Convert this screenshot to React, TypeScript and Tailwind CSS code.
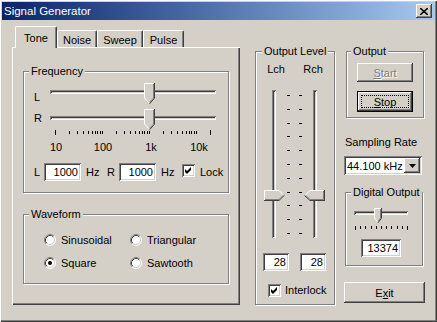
import React from "react";

const RAISED =
  "shadow-[inset_-1px_-1px_0_#404040,inset_1px_1px_0_#fff,inset_-2px_-2px_0_#808080]";
const SUNKEN =
  "shadow-[inset_1px_1px_0_#808080,inset_-1px_-1px_0_#fff,inset_2px_2px_0_#404040,inset_-2px_-2px_0_#d4d0c8]";

function Group({
  label,
  className = "",
  labelClass = "left-[5px]",
  children,
}: {
  label: string;
  className?: string;
  labelClass?: string;
  children?: React.ReactNode;
}) {
  return (
    <div
      className={
        "relative border border-[#808080] shadow-[inset_1px_1px_0_#fff,1px_1px_0_#fff] " +
        className
      }
    >
      <span
        className={
          "absolute top-[-8px] bg-[#d4d0c8] px-[2px] leading-[14px] whitespace-nowrap " +
          labelClass
        }
      >
        {label}
      </span>
      {children}
    </div>
  );
}

function ThumbDown({ w, h }: { w: number; h: number }) {
  const p = Math.floor(w / 2);
  const b = h - 1 - p;
  const m = w / 2;
  return (
    <svg width={w} height={h} viewBox={`0 0 ${w} ${h}`} className="block">
      <polygon points={`0,0 ${w},0 ${w},${b} ${m},${h} 0,${b}`} fill="#d4d0c8" />
      <polyline points={`0.5,${b} 0.5,0.5 ${w - 1},0.5`} fill="none" stroke="#fff" />
      <polyline points={`0.5,${b} ${m},${h - 0.5}`} fill="none" stroke="#fff" />
      <polyline points={`${w - 0.5},0 ${w - 0.5},${b + 0.2} ${m},${h - 0.2}`} fill="none" stroke="#404040" />
      <polyline points={`${w - 1.5},1 ${w - 1.5},${b} ${m},${h - 1.7}`} fill="none" stroke="#808080" />
    </svg>
  );
}

function ThumbRight() {
  return (
    <svg width="21" height="11" viewBox="0 0 21 11" className="block">
      <polygon points="0,0 15,0 20.5,5.5 15,11 0,11" fill="#d4d0c8" />
      <polyline points="0.5,10 0.5,0.5 15,0.5 20,5.5" fill="none" stroke="#fff" />
      <polyline points="0,10.5 15,10.5 20.6,5" fill="none" stroke="#404040" />
      <polyline points="1,9.5 15,9.5 19.3,5.3" fill="none" stroke="#808080" />
    </svg>
  );
}

function ThumbLeft() {
  return (
    <svg width="21" height="11" viewBox="0 0 21 11" className="block">
      <polygon points="21,0 6,0 0.5,5.5 6,11 21,11" fill="#d4d0c8" />
      <polyline points="20,0.5 6,0.5 1,5.5" fill="none" stroke="#fff" />
      <polyline points="0.5,5.5 6,10.5 21,10.5 M20.5,0 L20.5,11" fill="none" stroke="#404040" />
      <polyline points="20.5,0 20.5,11" fill="none" stroke="#404040" />
      <polyline points="2,5.5 6,9.5 19.5,9.5 19.5,1" fill="none" stroke="#808080" />
    </svg>
  );
}

function Check({ checked }: { checked: boolean }) {
  return (
    <span className={"inline-block w-[13px] h-[13px] bg-white shrink-0 " + SUNKEN}>
      {checked && (
        <svg width="13" height="13" viewBox="0 0 13 13" className="block">
          <polygon points="3,5 5,7 9,3 9,6 5,10 3,8" fill="#000" />
        </svg>
      )}
    </span>
  );
}

function Radio({ checked }: { checked: boolean }) {
  return (
    <svg width="12" height="12" viewBox="0 0 12 12" className="block shrink-0">
      <circle cx="6" cy="6" r="5" fill="#fff" />
      <path d="M2.11 9.89 A5.5 5.5 0 0 1 9.89 2.11" fill="none" stroke="#808080" />
      <path d="M9.89 2.11 A5.5 5.5 0 0 1 2.11 9.89" fill="none" stroke="#fff" />
      <path d="M2.82 9.18 A4.5 4.5 0 0 1 9.18 2.82" fill="none" stroke="#404040" />
      <path d="M9.18 2.82 A4.5 4.5 0 0 1 2.82 9.18" fill="none" stroke="#d4d0c8" />
      {checked && <circle cx="6" cy="6" r="2" fill="#000" />}
    </svg>
  );
}

function FreqSlider() {
  return (
    <div className="relative w-[170px] h-[21px]">
      <div className={"mt-[7px] mx-[2px] h-[4px] " + SUNKEN} />
      <div className="absolute left-[96px] top-0">
        <ThumbDown w={11} h={21} />
      </div>
    </div>
  );
}

function FreqTicks() {
  const vals: number[] = [];
  for (let d = 10; d <= 1000; d *= 10) for (let k = 1; k <= 9; k++) vals.push(d * k);
  vals.push(10000, 20000);
  return (
    <svg width="170" height="6" viewBox="0 0 170 6" className="block">
      {vals.map((v, i) => {
        const x = Math.round(7 + 47 * Math.log10(v / 10)) + 0.5;
        const end = i === 0 || i === vals.length - 1;
        return (
          <line key={i} x1={x} x2={x} y1={end ? 0 : 1} y2={end ? 5 : 4} stroke="#000" />
        );
      })}
    </svg>
  );
}

function Field({ className, children }: { className: string; children: React.ReactNode }) {
  return (
    <div className={"bg-white flex items-center justify-end pr-[3px] " + SUNKEN + " " + className}>
      {children}
    </div>
  );
}

function Tab({ selected, className, children }: { selected?: boolean; className: string; children: React.ReactNode }) {
  return (
    <div
      className={
        "relative flex items-center justify-center bg-[#d4d0c8] border-l border-t border-r border-l-white border-t-white border-r-[#404040] rounded-t-[2px] shadow-[inset_-1px_0_0_#808080] " +
        (selected ? "h-[22px] mb-[-1px] z-10 " : "h-[17px] pt-[2px] ") +
        className
      }
    >
      {children}
    </div>
  );
}

export default function App() {
  const vTicks = Array.from({ length: 11 }, (_, i) => Math.round(6 + i * 13.8) + 0.5);
  const dTicks = Array.from({ length: 11 }, (_, i) => Math.round(2 + i * 5.2) + 0.5);
  return (
    <div className="w-[437px] h-[322px] bg-[#d4d0c8] p-[2px] flex flex-col font-['Liberation_Sans',Arial,sans-serif] text-[11px] leading-[14px] text-black select-none overflow-hidden shadow-[inset_1px_1px_0_#fff,inset_-1px_-1px_0_#404040,inset_-2px_-2px_0_#808080]">
      {/* Title bar */}
      <div className="h-[18px] shrink-0 flex items-center bg-linear-to-r from-[#0a246a] to-[#a6caf0] pl-[2px]">
        <span className="text-white text-[11.5px]">Signal Generator</span>
        <div className={"ml-auto mr-[3px] w-[16px] h-[14px] bg-[#d4d0c8] flex items-center justify-center " + RAISED}>
          <svg width="8" height="7" viewBox="0 0 8 7" className="block">
            <path d="M0 0 L8 7 M8 0 L0 7" stroke="#000" strokeWidth="1.6" />
          </svg>
        </div>
      </div>

      {/* Body */}
      <div className="flex items-start pl-[10px] pt-[6px]">
        {/* Tabs column */}
        <div className="w-[228px] h-[279px] flex flex-col shrink-0">
          <div className="h-[21px] flex items-end pl-[3px] relative z-10 shrink-0">
            <Tab selected className="w-[42px]">Tone</Tab>
            <Tab className="w-[40px]">Noise</Tab>
            <Tab className="w-[46px]">Sweep</Tab>
            <Tab className="w-[41px]">Pulse</Tab>
          </div>
          <div className="flex-1 flex flex-col shadow-[inset_1px_1px_0_#fff,inset_-1px_-1px_0_#404040,inset_-2px_-2px_0_#808080]">
            <Group label="Frequency" className="ml-[11px] mt-[24px] w-[206px] h-[122px] flex flex-col">
              <div className="flex items-start pl-[10px] mt-[11px]">
                <span className="w-[14px] mt-[7px]">L</span>
                <FreqSlider />
              </div>
              <div className="flex items-start pl-[10px] mt-[5px]">
                <span className="w-[14px] mt-[2px]">R</span>
                <FreqSlider />
              </div>
              <div className="pl-[24px]">
                <FreqTicks />
              </div>
              <div className="flex mt-[4px] pl-[17px]">
                <span className="w-[30px] text-center">10</span>
                <span className="w-[30px] ml-[17px] text-center">100</span>
                <span className="w-[30px] ml-[18px] text-center">1k</span>
                <span className="w-[30px] ml-[18px] text-center">10k</span>
              </div>
              <div className="flex items-center mt-[9px] pl-[10px] h-[18px]">
                <span className="w-[10px]">L</span>
                <Field className="w-[37px] h-[18px]">1000</Field>
                <span className="ml-[5px] w-[13px]">Hz</span>
                <span className="ml-[8px] w-[12px]">R</span>
                <Field className="w-[37px] h-[18px]">1000</Field>
                <span className="ml-[5px] w-[13px]">Hz</span>
                <span className="ml-[8px]">
                  <Check checked />
                </span>
                <span className="ml-[5px]">Lock</span>
              </div>
            </Group>
            <Group label="Waveform" className="ml-[11px] mt-[21px] w-[206px] h-[70px] flex flex-col">
              <div className="flex mt-[18px] pl-[20px] h-[13px] items-center">
                <div className="w-[86px] flex items-center">
                  <Radio checked={false} />
                  <span className="ml-[5px]">Sinusoidal</span>
                </div>
                <div className="flex items-center">
                  <Radio checked={false} />
                  <span className="ml-[5px]">Triangular</span>
                </div>
              </div>
              <div className="flex mt-[10px] pl-[20px] h-[13px] items-center">
                <div className="w-[86px] flex items-center">
                  <Radio checked />
                  <span className="ml-[5px]">Square</span>
                </div>
                <div className="flex items-center">
                  <Radio checked={false} />
                  <span className="ml-[5px]">Sawtooth</span>
                </div>
              </div>
            </Group>
          </div>
        </div>

        {/* Output Level */}
        <Group label="Output Level" labelClass="left-[6px]" className="ml-[15px] mt-[25px] w-[80px] h-[254px] shrink-0 flex flex-col">
          <div className="flex mt-[10px] pl-[7px] gap-[11px]">
            <span className="w-[26px] text-center">Lch</span>
            <span className="w-[26px] text-center">Rch</span>
          </div>
          <div className="relative ml-[7px] mt-[13px] w-[62px] h-[150px]">
            <div className={"absolute left-[9px] top-[1px] w-[4px] h-[148px] " + SUNKEN} />
            <div className={"absolute left-[50px] top-[1px] w-[4px] h-[148px] " + SUNKEN} />
            <svg width="62" height="150" viewBox="0 0 62 150" className="absolute left-0 top-0">
              {vTicks.map((y, i) => (
                <g key={i}>
                  <line x1="24" x2="27" y1={y} y2={y} stroke="#000" />
                  <line x1="36" x2="39" y1={y} y2={y} stroke="#000" />
                </g>
              ))}
            </svg>
            <div className="absolute left-[1px] top-[101px]">
              <ThumbRight />
            </div>
            <div className="absolute left-[41px] top-[101px]">
              <ThumbLeft />
            </div>
          </div>
          <div className="flex mt-[14px] pl-[7px] gap-[11px]">
            <Field className="w-[26px] h-[18px]">28</Field>
            <Field className="w-[26px] h-[18px]">28</Field>
          </div>
          <div className="flex items-center mt-[12px] pl-[12px]">
            <Check checked />
            <span className="ml-[4px]">Interlock</span>
          </div>
        </Group>

        {/* Right column */}
        <div className="ml-[9px] w-[81px] flex flex-col shrink-0">
          <Group label="Output" labelClass="left-[4px]" className="ml-[2px] mt-[25px] w-[78px] h-[67px] flex flex-col">
            <div className={"mt-[11px] ml-[10px] w-[56px] h-[19px] flex items-center justify-center text-[#808080] [text-shadow:1px_1px_0_#fff] " + RAISED}>
              <span>
                <span className="underline">S</span>tart
              </span>
            </div>
            <div className="relative mt-[9px] ml-[10px] w-[56px] h-[21px] border border-black flex">
              <div className={"flex-1 flex items-center justify-center " + RAISED}>
                <span>
                  <span className="underline">S</span>top
                </span>
              </div>
              <div className="absolute inset-[3px] border border-dotted border-black" />
            </div>
          </Group>
          <span className="mt-[17px] ml-[1px] whitespace-nowrap">Sampling Rate</span>
          <div className={"mt-[7px] w-[78px] h-[19px] bg-white flex items-center pl-[3px] pr-[2px] " + SUNKEN}>
            <span className="flex-1">44.100 kHz</span>
            <div className={"w-[16px] h-[15px] bg-[#d4d0c8] flex items-center justify-center " + RAISED}>
              <svg width="7" height="4" viewBox="0 0 7 4" className="block">
                <polygon points="0,0 7,0 3.5,4" fill="#000" />
              </svg>
            </div>
          </div>
          <Group label="Digital Output" className="mt-[17px] ml-[1px] w-[78px] h-[74px] flex flex-col">
            <div className="relative mt-[15px] ml-[7px] w-[56px] h-[15px]">
              <div className={"mt-[3px] mx-[1px] h-[4px] " + SUNKEN} />
              <div className="absolute left-[21px] top-0">
                <ThumbDown w={8} h={15} />
              </div>
            </div>
            <svg width="56" height="4" viewBox="0 0 56 4" className="block ml-[7px] mt-[3px]">
              {dTicks.map((x, i) => (
                <line key={i} x1={x} x2={x} y1="0" y2={i === 0 || i === 10 ? 4 : 3} stroke="#000" />
              ))}
            </svg>
            <Field className="mt-[9px] ml-[15px] w-[40px] h-[18px]">13374</Field>
          </Group>
          <div className={"mt-[16px] w-[81px] h-[21px] flex items-center justify-center " + RAISED}>
            <span>
              E<span className="underline">x</span>it
            </span>
          </div>
        </div>
      </div>
    </div>
  );
}
